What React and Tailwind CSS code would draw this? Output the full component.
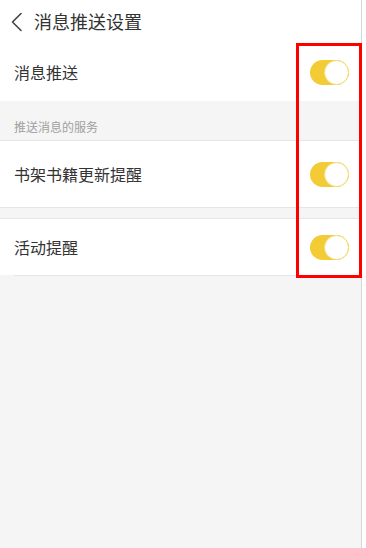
import React from 'react';

// Yellow switch, always on in this screen
const Toggle = () => (
  <div className="w-[39px] h-[25px] rounded-full bg-[#f2cb35] relative">
    <div className="absolute right-0 top-0 w-[25px] h-[25px] rounded-full bg-white border border-[#f6dc7a]" />
  </div>
);

const SettingRow = ({ label, className = '' }) => (
  <div className={`bg-white flex items-center justify-between pl-[14px] pr-[12px] ${className}`}>
    <span className="text-[16px] text-[#333]">{label}</span>
    <Toggle />
  </div>
);

const App = () => {
  return (
    <div className="flex w-[366px] min-h-[548px] bg-white" style={{ fontFamily: '"Noto Sans CJK SC", "Noto Sans", sans-serif' }}>
      <div className="relative w-[362px] bg-[#f5f5f5] border-r border-[#d6d6d6]">
        {/* header */}
        <div className="h-[43px] bg-white flex items-center pl-[10px]">
          <svg width="13" height="20" viewBox="0 0 13 20" fill="none" stroke="#444" strokeWidth="1.6" strokeLinecap="round" strokeLinejoin="round">
            <path d="M11 1.5L2.5 10L11 18.5" />
          </svg>
          <span className="ml-[11px] text-[18px] text-[#333]">消息推送设置</span>
        </div>

        <SettingRow label="消息推送" className="h-[58px]" />

        <div className="h-[40px] flex items-end pl-[14px] pb-[4px] border-b border-[#e6e6e6]">
          <span className="text-[12px] text-[#a0a0a0]">推送消息的服务</span>
        </div>

        <SettingRow label="书架书籍更新提醒" className="h-[67px] border-b border-[#e6e6e6]" />

        <div className="h-[11px] border-b border-[#e6e6e6]" />

        <SettingRow label="活动提醒" className="h-[56px]" />
        <div className="ml-[14px] h-px bg-[#e6e6e6]" />

        {/* annotation box */}
        <div className="absolute left-[296px] top-[43px] w-[66px] h-[235px] border-[3px] border-[#ff0000]" />
      </div>
      <div className="flex-1 bg-white" />
    </div>
  );
};

export default App;
